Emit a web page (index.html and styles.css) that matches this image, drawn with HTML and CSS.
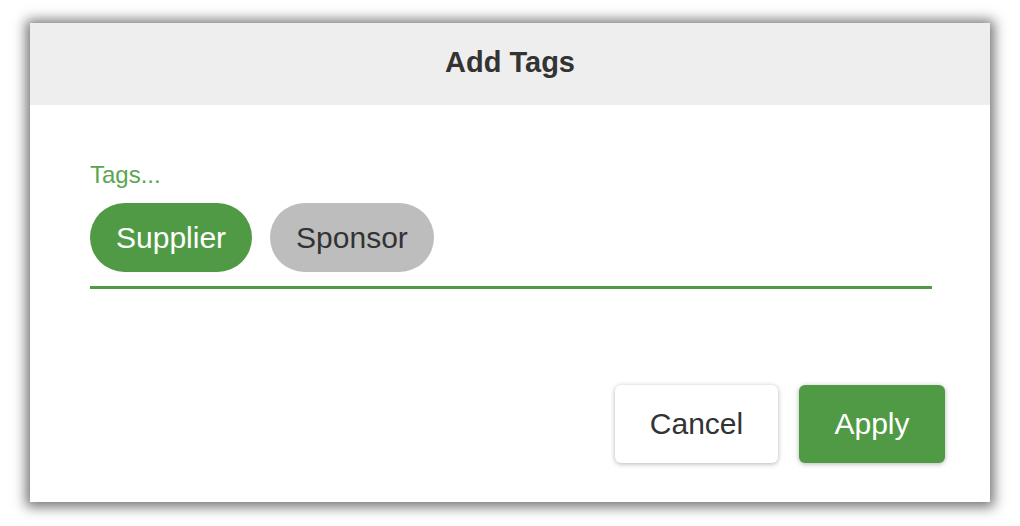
FILE: index.html
```html
<!DOCTYPE html>
<html>
<head>
<meta charset="utf-8">
<link rel="stylesheet" href="styles.css">
</head>
<body>
<div class="dialog">
  <div class="dialog-header">
    <h1 class="dialog-title">Add Tags</h1>
  </div>
  <div class="dialog-body">
    <label class="field-label">Tags...</label>
    <div class="chip-field">
      <span class="chip chip-selected">Supplier</span>
      <span class="chip">Sponsor</span>
    </div>
  </div>
  <div class="dialog-footer">
    <button class="btn btn-cancel">Cancel</button>
    <button class="btn btn-apply">Apply</button>
  </div>
</div>
</body>
</html>
```
FILE: styles.css
```css
html, body {
  margin: 0;
  padding: 0;
  background: #ffffff;
  font-family: "Liberation Sans", Arial, sans-serif;
}
body {
  padding: 23px 0 24px 30px;
}
.dialog {
  width: 960px;
  height: 479px;
  background: #ffffff;
  box-shadow: 0 1px 12px 4px rgba(0, 0, 0, 0.55);
  display: flex;
  flex-direction: column;
}
.dialog-header {
  height: 82px;
  background: #eeeeee;
  display: flex;
  align-items: center;
  justify-content: center;
}
.dialog-title {
  margin: 0;
  font-size: 29px;
  font-weight: bold;
  color: #333333;
  line-height: 34px;
  padding-bottom: 5px;
}
.dialog-body {
  padding: 56px 58px 0 60px;
  display: flex;
  flex-direction: column;
}
.field-label {
  font-size: 24px;
  line-height: 28px;
  color: #5aa650;
}
.chip-field {
  margin-top: 14px;
  padding-bottom: 14px;
  border-bottom: 3px solid #519a45;
  display: flex;
  gap: 18px;
}
.chip {
  height: 69px;
  padding: 0 26px;
  border-radius: 35px;
  background: #bdbdbd;
  color: #333333;
  font-size: 30px;
  display: flex;
  align-items: center;
}
.chip-selected {
  background: #519a45;
  color: #ffffff;
}
.dialog-footer {
  margin-top: auto;
  padding: 0 45px 39px 0;
  display: flex;
  justify-content: flex-end;
  gap: 21px;
}
.btn {
  height: 78px;
  border: none;
  border-radius: 6px;
  font-family: "Liberation Sans", Arial, sans-serif;
  font-size: 30px;
  cursor: pointer;
  box-shadow: 0 1px 5px rgba(0, 0, 0, 0.3);
}
.btn-cancel {
  width: 163px;
  background: #ffffff;
  color: #333333;
}
.btn-apply {
  width: 146px;
  background: #519a45;
  color: #ffffff;
}
```
